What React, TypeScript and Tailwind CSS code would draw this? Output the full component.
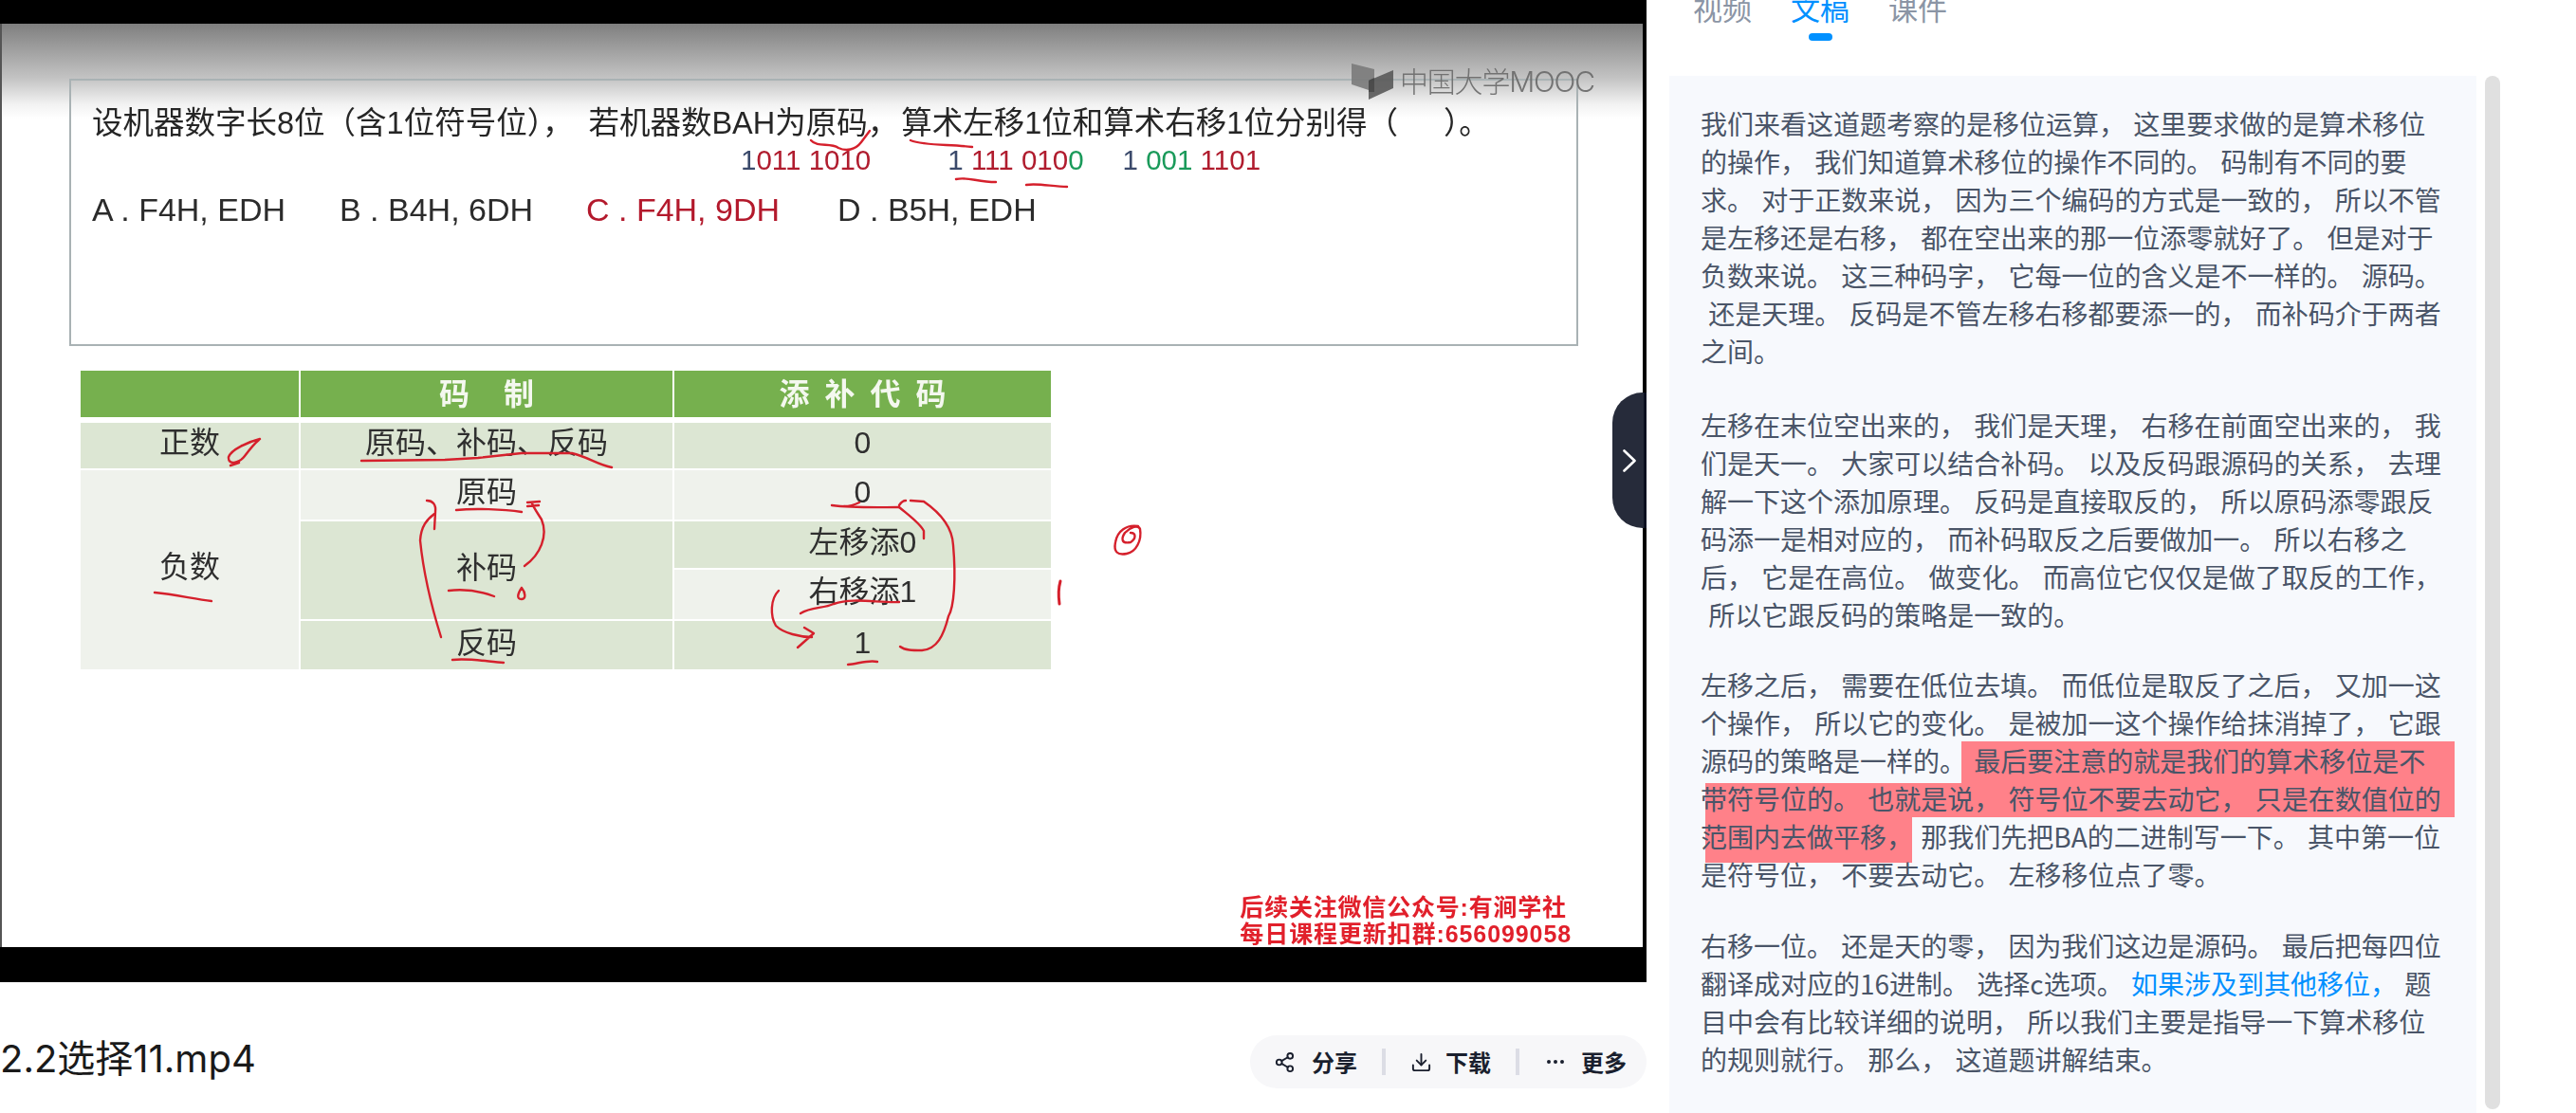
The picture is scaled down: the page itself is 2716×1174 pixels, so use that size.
import { Download, Ellipsis, Share2 } from "lucide-react"

const slideFont = "font-['Liberation_Sans','Noto_Sans_CJK_SC',sans-serif]"

function InkMarks() {
  return (
    <svg
      className="absolute left-0 top-0 h-[1036px] w-[1736px]"
      viewBox="0 0 1736 1036"
      fill="none"
      stroke="#d5202c"
      strokeWidth="2.4"
      strokeLinecap="round"
      strokeLinejoin="round"
    >
      <path d="M855 148 C862 156 875 150 884 156 C892 160 902 158 908 150 L917 138" />
      <path d="M960 148 C975 154 1000 152 1025 155" />
      <path d="M1008 189 C1020 186 1030 192 1050 192" />
      <path d="M1082 195 C1095 193 1110 197 1125 197" />
      <path d="M274 463 C262 466 244 474 241 482 C240 491 252 489 258 481 C264 473 268 468 273 464 M252 488 L243 491" />
      <path d="M381 486 L469 485 L504 483 L550 478 L603 478 C620 482 630 490 645 493" />
      <path d="M481 538 C500 536 530 537 550 540" />
      <path d="M553 597 C570 585 578 565 571 548 C566 540 563 536 561 531 M556 530 L569 529 M556 534 L568 533" />
      <path d="M465 672 C455 640 446 600 443 570 C444 555 450 548 458 542 M450 528 C456 528 460 532 459 540 L458 558" />
      <path d="M473 623 C490 621 505 623 521 629" />
      <path d="M550 620 C546 626 544 632 550 632 C555 632 554 625 550 620" />
      <path d="M163 625 C185 627 205 632 223 634" />
      <path d="M477 696 C495 694 515 698 531 699" />
      <path d="M877 533 C900 536 925 535 948 535 M890 534 C896 534 902 532 906 530" />
      <path d="M948 533 C950 530 952 528 955 528 M960 528 L974 529 C990 540 1004 555 1005 575 C1008 610 1006 640 1000 650 C995 670 988 685 972 686 C962 686 954 686 949 682" />
      <path d="M948 535 C960 545 970 552 974 560 L974 568" />
      <path d="M844 647 C855 640 868 642 879 637 C900 630 925 636 948 635" />
      <path d="M821 623 C812 632 812 650 818 660 C826 668 844 672 856 672 M848 662 L858 668 L841 683" />
      <path d="M894 701 C905 700 915 696 925 698" />
      <path d="M1200 555 C1188 553 1178 560 1176 572 C1174 582 1178 586 1188 584 C1198 582 1204 570 1202 558 C1200 553 1192 556 1186 562 C1182 568 1182 574 1192 572 C1198 568 1198 562 1192 562" />
      <path d="M1118 613 C1116 620 1116 630 1117 637" strokeWidth="3" />
    </svg>
  )
}

function MoocMark() {
  return (
    <div className="absolute left-[1423px] top-[42px] flex items-center gap-[5px] text-[#6a6a6a] opacity-90">
      <svg viewBox="0 0 46 38" className="h-[38px] w-[46px]">
        <path d="M0 0 L24 6 L24 30 L0 22 Z" fill="#7b7b7b" />
        <path d="M18 18 L44 7 L44 26 L18 38 Z" fill="#5a5a5a" />
        <path d="M18 18 L24 15 L24 30 L18 30 Z" fill="#3e3e3e" />
      </svg>
      <span className="font-['Inter','Noto_Sans_CJK_SC',sans-serif] text-[30px] leading-[30px] font-light tracking-[-1.2px]">中国大学MOOC</span>
    </div>
  )
}

function TableCell({ className, children }: { className: string; children?: React.ReactNode }) {
  return <div className={"flex items-center justify-center pb-[6px] text-[#2f2f2f] " + className}>{children}</div>
}

function CodeTable() {
  return (
    <div className="mt-[26px] ml-[12px] w-[1023px] text-[32px] leading-none">
      <div className="mb-[6px] grid h-[49px] grid-cols-[230px_392px_397px] gap-x-[2px] font-bold text-[#f4f8ef]">
        <div className="bg-[#76b04e]" />
        <div className="flex items-center justify-center bg-[#76b04e] tracking-[36px] pl-[36px]">码制</div>
        <div className="flex items-center justify-center bg-[#76b04e] tracking-[16px] pl-[16px]">添补代码</div>
      </div>
      <div className="grid grid-cols-[230px_392px_397px] grid-rows-[48px_52px_49px_52px_51px] gap-[2px]">
        <TableCell className="bg-[#dce6d3]">正数</TableCell>
        <TableCell className="bg-[#dce6d3]">原码、补码、反码</TableCell>
        <TableCell className="bg-[#dce6d3]">0</TableCell>
        <TableCell className="row-span-4 bg-[#eff2ec]">负数</TableCell>
        <TableCell className="bg-[#eff2ec]">原码</TableCell>
        <TableCell className="bg-[#eff2ec]">0</TableCell>
        <TableCell className="row-span-2 bg-[#dce6d3]">补码</TableCell>
        <TableCell className="bg-[#dce6d3]">左移添0</TableCell>
        <TableCell className="bg-[#eff2ec]">右移添1</TableCell>
        <TableCell className="bg-[#dce6d3]">反码</TableCell>
        <TableCell className="bg-[#dce6d3]">1</TableCell>
      </div>
    </div>
  )
}

function Slide() {
  return (
    <div className={"relative flex h-[974px] w-[1732px] flex-col border-l-2 border-[#555] bg-[linear-gradient(to_bottom,#7f7f7f_0px,#c4c4c4_58px,#f2f2f2_85px,#ffffff_100px)] pt-[58px] pl-[71px] blur-[0.5px] " + slideFont}>
      <div className="h-[282px] w-[1591px] border-2 border-[#a9b2b4] pt-[25px] pl-[22px]">
        <p className="whitespace-nowrap text-[32.5px] leading-[40px] text-[#262626]">
          设机器数字长8位（含1位符号位），<span className="ml-[16px]">若机器数BAH为原码，</span><span className="ml-[3px]">算术左移1位和算术右移1位分别得（</span><span className="ml-[48px]">）。</span>
        </p>
        <div className="mt-[4px] flex h-[30px] items-center text-[29.5px] leading-none">
          <span className="ml-[684px] text-[#b01c2e]"><span className="text-[#3b4a6b]">1</span>011 1010</span>
          <span className="ml-[81px] text-[#b01c2e]"><span className="text-[#3b4a6b]">1 </span>111 010<span className="text-[#1a9a5a]">0</span></span>
          <span className="ml-[41px] text-[#b01c2e]"><span className="text-[#3b4a6b]">1 </span><span className="text-[#1a9a5a]">001</span> 1101</span>
        </div>
        <div className="mt-[17px] flex text-[34px] leading-[40px] text-[#2b2b2b]">
          <span className="w-[261px]">A . F4H, EDH</span>
          <span className="w-[260px]">B . B4H, 6DH</span>
          <span className="w-[265px] text-[#b3192c]">C . F4H, 9DH</span>
          <span>D . B5H, EDH</span>
        </div>
      </div>
      <CodeTable />
      <div className="mt-auto mr-[75px] self-end text-[25px] leading-[28px] font-bold text-[#e1202b]">
        <p className="tracking-[0.8px]">后续关注微信公众号:有涧学社</p>
        <p className="tracking-[0.9px]">每日课程更新扣群:656099058</p>
      </div>
      <MoocMark />
    </div>
  )
}

function VideoPlayer() {
  return (
    <div className="relative h-[1036px] w-[1736px] overflow-hidden bg-black pt-[25px]">
      <Slide />
      <InkMarks />
      <div className="absolute top-[414px] right-0 flex h-[143px] w-[36px] items-center justify-center rounded-l-[32px] border-r-[3px] border-[#0b1020] bg-[#262b3a] pl-[2px]">
        <svg viewBox="0 0 14 24" className="h-[24px] w-[14px]" fill="none" stroke="#ffffff" strokeWidth="2.6" strokeLinecap="round" strokeLinejoin="round">
          <path d="M1.5 1.5 L12.5 12 L1.5 22.5" />
        </svg>
      </div>
    </div>
  )
}

function ActionBar() {
  return (
    <div className="flex h-[56px] w-[418px] items-center rounded-[28px] bg-[#f7f7f9] pl-[25px] text-[24px] leading-none font-bold text-[#1a1f2e]">
      <Share2 size={23} strokeWidth={2} />
      <span className="ml-[17px]">分享</span>
      <span className="mx-[26px] h-[28px] w-[4px] bg-[#dcdde5]" />
      <Download size={23} strokeWidth={2} />
      <span className="ml-[14px]">下载</span>
      <span className="mx-[26px] h-[28px] w-[4px] bg-[#dcdde5]" />
      <Ellipsis size={24} strokeWidth={2} />
      <span className="ml-[15px]">更多</span>
    </div>
  )
}

function Tabs() {
  return (
    <div className="-mt-[8px] flex h-[88px] gap-[41px] pl-[25px] text-[31px] leading-[32px] text-[#8b95a5]">
      <div>视频</div>
      <div className="flex flex-col items-center text-[#0090ff]">
        文稿
        <span className="mt-[11px] h-[8px] w-[25px] rounded-full bg-[#0090ff]" />
      </div>
      <div>课件</div>
    </div>
  )
}

function Transcript() {
  return (
    <div className="h-[1094px] w-[851px] bg-[#f7f9fd] px-[33px] pt-[30px] text-[28px] leading-[40px] text-[#4a5568] [word-spacing:2px]">
      <p>
        我们来看这道题考察的是移位运算， 这里要求做的是算术移位的操作， 我们知道算术移位的操作不同的。 码制有不同的要求。 对于正数来说， 因为三个编码的方式是一致的， 所以不管是左移还是右移， 都在空出来的那一位添零就好了。 但是对于负数来说。 这三种码字， 它每一位的含义是不一样的。 源码。 {"\u00a0"}还是天理。 反码是不管左移右移都要添一的， 而补码介于两者之间。
      </p>
      <p className="mt-[38px]">
        左移在末位空出来的， 我们是天理， 右移在前面空出来的， 我们是天一。 大家可以结合补码。 以及反码跟源码的关系， 去理解一下这个添加原理。 反码是直接取反的， 所以原码添零跟反码添一是相对应的， 而补码取反之后要做加一。 所以右移之后， 它是在高位。 做变化。 而高位它仅仅是做了取反的工作， {"\u00a0"}所以它跟反码的策略是一致的。
      </p>
      <div className="relative mt-[34px]">
        <div className="absolute top-[80px] left-[275px] h-[44px] w-[520px] bg-[#ff8189]" />
        <div className="absolute top-[124px] left-[5px] h-[36px] w-[790px] bg-[#ff8189]" />
        <div className="absolute top-[160px] left-[5px] h-[48px] w-[218px] bg-[#ff8189]" />
        <p className="relative">
          左移之后， 需要在低位去填。 而低位是取反了之后， 又加一这个操作， 所以它的变化。 是被加一这个操作给抹消掉了， 它跟源码的策略是一样的。 最后要注意的就是我们的算术移位是不带符号位的。 也就是说， 符号位不要去动它， 只是在数值位的范围内去做平移， 那我们先把BA的二进制写一下。 其中第一位是符号位， 不要去动它。 左移移位点了零。
        </p>
      </div>
      <p className="mt-[35px]">
        右移一位。 还是天的零， 因为我们这边是源码。 最后把每四位翻译成对应的16进制。 选择c选项。 <span className="text-[#0090ff]">如果涉及到其他移位，</span> 题目中会有比较详细的说明， 所以我们主要是指导一下算术移位的规则就行。 那么， 这道题讲解结束。
      </p>
    </div>
  )
}

export default function App() {
  return (
    <div className="flex h-[1174px] w-[2716px] overflow-hidden bg-white font-['Noto_Sans_CJK_SC',sans-serif]">
      <div className="w-[1736px] shrink-0">
        <VideoPlayer />
        <div className="flex items-start justify-between pt-[56px]">
          <h1 className="-mt-[3px] text-[40px] leading-[56px] font-normal text-[#1a1a1a] font-['Inter','Noto_Sans_CJK_SC',sans-serif]">2.2选择11.mp4</h1>
          <ActionBar />
        </div>
      </div>
      <div className="flex-1 pl-[24px]">
        <Tabs />
        <div className="flex gap-[9px]">
          <Transcript />
          <div className="h-[1090px] w-[16px] rounded-full bg-[#e0e0e0]" />
        </div>
      </div>
    </div>
  )
}
